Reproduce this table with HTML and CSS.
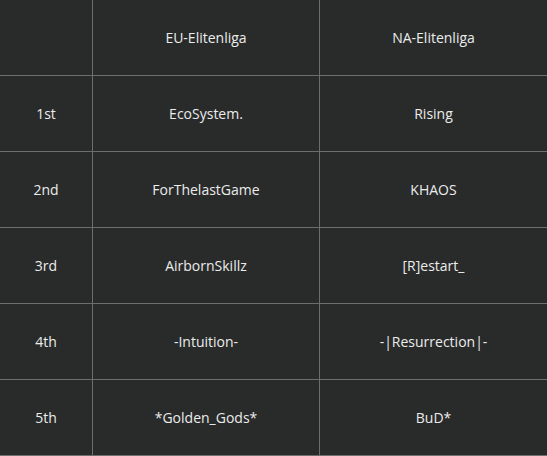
FILE: index.html
```html
<!DOCTYPE html>
<html>
<head>
<meta charset="utf-8">
<link rel="stylesheet" href="styles.css">
</head>
<body>
<table class="standings">
  <tr><td class="rank"></td><td class="eu">EU-Elitenliga</td><td class="na">NA-Elitenliga</td></tr>
  <tr><td class="rank">1st</td><td class="eu">EcoSystem.</td><td class="na">Rising</td></tr>
  <tr><td class="rank">2nd</td><td class="eu">ForThelastGame</td><td class="na">KHAOS</td></tr>
  <tr><td class="rank">3rd</td><td class="eu">AirbornSkillz</td><td class="na">[R]estart_</td></tr>
  <tr><td class="rank">4th</td><td class="eu">-Intuition-</td><td class="na">-|Resurrection|-</td></tr>
  <tr><td class="rank">5th</td><td class="eu">*Golden_Gods*</td><td class="na">BuD*</td></tr>
</table>
</body>
</html>
```
FILE: styles.css
```css
html, body {
  margin: 0;
  padding: 0;
  background: #282b2a;
}
.standings {
  border-collapse: collapse;
  width: 547px;
  table-layout: fixed;
  font-family: "Open Sans", sans-serif;
  font-size: 14px;
  color: #ececec;
}
.standings td {
  height: 75px;
  padding: 0;
  text-align: center;
  vertical-align: middle;
  border-bottom: 1px solid #6b6e6c;
}
.standings tr:first-child td { height: 75px; }
.standings td.rank { width: 92px; border-right: 1px solid #6b6e6c; }
.standings td.eu { width: 226px; border-right: 1px solid #6b6e6c; }
```
